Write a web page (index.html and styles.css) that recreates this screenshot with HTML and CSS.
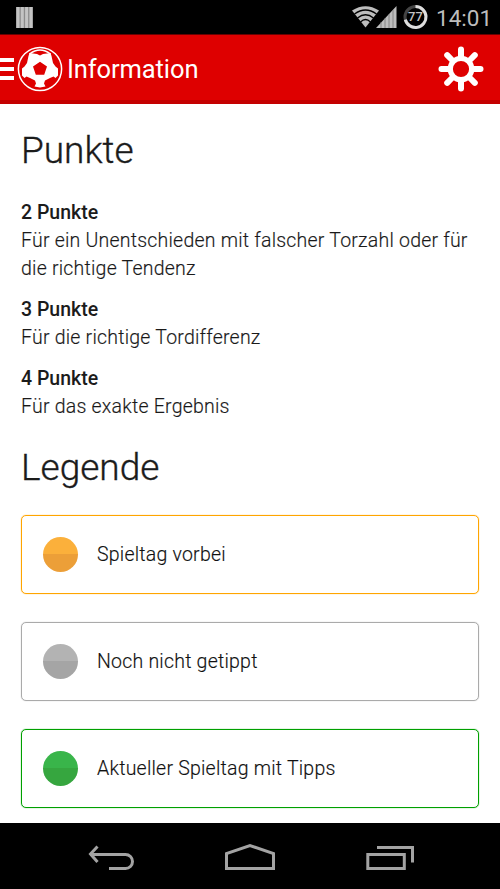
FILE: index.html
```html
<!DOCTYPE html>
<html lang="de">
<head>
<meta charset="utf-8">
<title>Information</title>
<link rel="stylesheet" href="styles.css">
</head>
<body>
<div class="status">
  <svg class="bars" width="17" height="21" viewBox="0 0 17 21"><path fill="#8c8c8c" d="M0 0h17v21H0z"/><path fill="#c4c4c4" d="M.5 0h3v21h-3zM4.8 0h3v21h-3zM9.100 0h3v21h-3zM13.400 0h3v21h-3z"/></svg>
  <svg class="signals" width="80" height="26" viewBox="0 0 80 26">
    <path fill="#bdbdbd" d="M0 6.500Q13.500-2 27 6.500L13.500 23.500z"/>
    <path fill="none" stroke="#000" stroke-width="1.300" d="M2.500 10Q13.500 2 24.500 10M5.500 14Q13.500 7.500 21.500 14M8.500 18Q13.500 13 18.500 18"/>
    <path fill="#bdbdbd" d="M44.500 2v22H24z"/>
    <path stroke="#777" stroke-width=".8" d="M29 18v6M33 14v10M37 10v14M41 6v18"/>
    <circle cx="63.500" cy="13" r="10.500" fill="none" stroke="#444" stroke-width="3"/>
    <path d="M63.500 2.500A10.500 10.500 0 1 1 53.300 15.600" fill="none" stroke="#dedede" stroke-width="3"/>
    <text class="battery" x="63.500" y="17" text-anchor="middle">77</text>
  </svg>
  <span class="clock">14:01</span>
</div>
<header class="bar">
  <div class="menu"><i></i><i></i><i></i></div>
  <svg class="ball" width="46" height="46" viewBox="0 0 46 46">
    <circle cx="23" cy="23" r="21.600" fill="none" stroke="#fff" stroke-width="1.500"/>
    <path fill="#fff" fill-rule="evenodd" d="M12.500 7L20 8L23 9.500L26 8L33.500 7L34.500 10L36 17L38.500 20.500L41 22.500V29.500L38.500 32L36.500 30.500L33 32L28 34.500L27 37.500L28.500 40.500L23 41.500L17.500 40.500L19 37.500L18 34.500L13 32L9.500 30.500L7.500 32L5 29.500V22.500L7.500 20.500L10 17L11.500 10zM23 15.800L16 20.500L18.800 28.800H27.200L30 20.500z"/>
    <path fill="none" stroke="#fff" stroke-width="1.500" d="M12.500 8Q23 0 33.500 8"/>
  </svg>
  <h1 class="title">Information</h1>
  <svg class="gear" width="46" height="46" viewBox="0 0 46 46" fill="none" stroke="#fff" stroke-width="6" stroke-linecap="round"><circle cx="23" cy="23" r="10.700" stroke-width="5.200"/><path d="M23 10V3.500M23 36v6.500M10 23H3.500M36 23h6.500M13.500 13.500L9.200 9.200M32.500 13.500l4.300-4.300M13.500 32.500l-4.300 4.300M32.500 32.500l4.300 4.300" stroke-width="6"/></svg>
</header>
<main class="content">
  <h2 class="heading">Punkte</h2>
  <div class="rule"><b>2 Punkte</b><p>Für ein Unentschieden mit falscher Torzahl oder für<br>die richtige Tendenz</p></div>
  <div class="rule"><b>3 Punkte</b><p>Für die richtige Tordifferenz</p></div>
  <div class="rule"><b>4 Punkte</b><p>Für das exakte Ergebnis</p></div>
  <h2 class="heading legend">Legende</h2>
  <div class="card orange"><i class="dot"></i><span>Spieltag vorbei</span></div>
  <div class="card gray"><i class="dot"></i><span>Noch nicht getippt</span></div>
  <div class="card green"><i class="dot"></i><span>Aktueller Spieltag mit Tipps</span></div>
</main>
<nav class="nav">
  <svg width="500" height="66" viewBox="0 0 500 66" fill="none" stroke="#a3a3a3" stroke-width="3">
    <path d="M97.500 23.500L90.500 31l7 8M90 31.500h35.500a7 7 0 0 1 0 14H109"/>
    <path d="M226.500 45.500V30.500L250 22.500l23.500 8v15z"/>
    <path d="M367.800 31.500h36.500v14h-36.500zM377 24.500h35.500v15"/>
  </svg>
</nav>
</body>
</html>
```
FILE: styles.css
```css
* { box-sizing: border-box; }
body { margin: 0; width: 500px; height: 889px; overflow: hidden; display: flex; flex-direction: column; background: #fff; color: #1b1b1b; font-family: Roboto, sans-serif; }
svg { display: block; flex: none; }
h1, h2, p { margin: 0; font-weight: 400; }
.status { height: 34px; flex: none; background: #000; display: flex; align-items: flex-start; padding: 0 9px 0 16px; }
.bars { margin-top: 7px; }
.signals { margin: 4px 0 0 auto; }
.battery { font: 500 13px Roboto, sans-serif; fill: #c4c4c4; }
.clock { width: 56px; margin-right: -1px; margin-left: 4px; font-size: 22.500px; line-height: 36px; color: #bdbdbd; white-space: nowrap; }
.bar { height: 70px; flex: none; background: #de0000; border-top: 1px solid #6a0000; border-bottom: 4px solid #c40000; display: flex; align-items: center; padding-right: 16px; color: #fff; }
.menu { width: 14px; display: grid; gap: 5px; margin-top: 3px; }
.menu i { height: 4px; background: #fff; }
.ball { margin: 2px 0 0 2.500px; }
.title { margin-left: 4.500px; margin-top: 2px; font-size: 25.500px; letter-spacing: -.1px; }
.gear { margin: 2px 0 0 auto; }
.content { height: 719px; flex: none; padding: 23px 21px 0; }
.heading { font-size: 37px; font-weight: 300; -webkit-text-stroke: .35px #1b1b1b; line-height: 48px; margin-bottom: 23.500px; }
.rule { font-size: 19.500px; line-height: 28px; margin-bottom: 13.300px; }
.rule b { font-weight: 500; display: block; }
.rule p, .card { font-weight: 300; letter-spacing: .22px; -webkit-text-stroke: .15px #111; }
.legend { margin: 22.500px 0 23px; }
.card { height: 79px; border: 1.500px solid; border-radius: 5px; margin-bottom: 28px; padding-left: 21px; display: flex; align-items: center; gap: 19px; font-size: 19.500px; box-shadow: 0 0 1px currentColor; }
.card span { color: #111; }
.dot { width: 35px; height: 35px; border-radius: 50%; }
.orange { border-color: #ffa500; color: #ffa500; }
.gray { border-color: #aaa; color: #aaa; }
.green { border-color: #00a000; color: #00a000; }
.orange .dot { background: linear-gradient(#fbb03b 50%, #ec9f38 50%); }
.gray .dot { background: linear-gradient(#b3b3b3 50%, #a5a5a5 50%); }
.green .dot { background: linear-gradient(#39b54a 50%, #36a63f 50%); }
.nav { height: 66px; flex: none; background: #000; }
```
